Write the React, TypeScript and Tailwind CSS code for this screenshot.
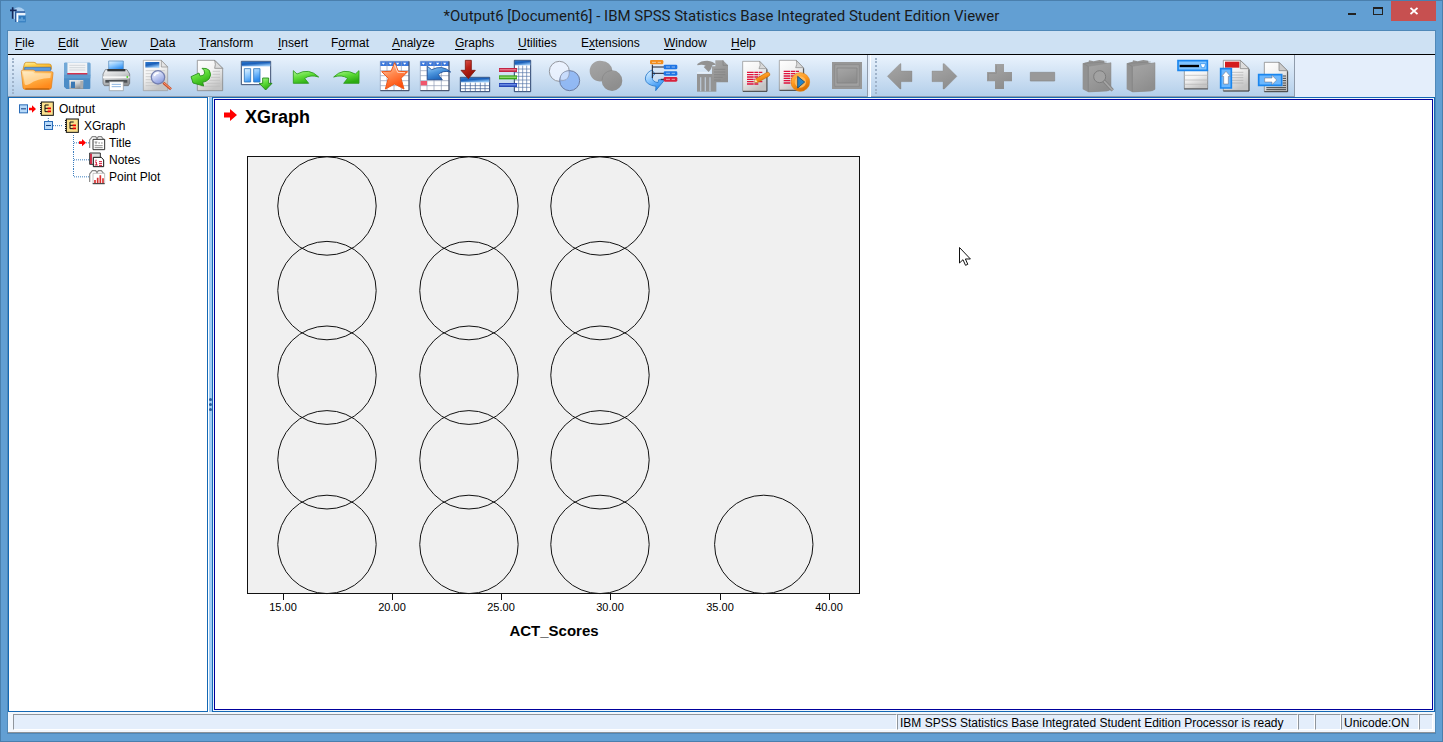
import React from "react";

type IconProps = { box: string; children: React.ReactNode };

function Icon({ box, children }: IconProps) {
  return (
    <svg viewBox={box} className="block size-8 overflow-visible" aria-hidden="true">
      {children}
    </svg>
  );
}

function Gradients() {
  const stops: [string, string, string, string][] = [
    ["gFolder", "#ffe9b8", "#ffb347", "#ff8a1c"],
    ["gTab", "#fff2a8", "#ffd04a", "#f5a21c"],
    ["gBlue", "#9fd4fb", "#4b94dc", "#1b62b8"],
    ["gBar", "#2c79cf", "#1a5fb8", "#8fc4f5"],
    ["gPage", "#ffffff", "#f2f2f2", "#c4c4c4"],
    ["gGreen", "#b5f59a", "#5fdd3a", "#2cab12"],
    ["gStar", "#ffe3d2", "#ff8a50", "#ff4e0a"],
    ["gRed", "#e06058", "#bb2218", "#8c100a"],
    ["gGray", "#a6a6a6", "#9b9b9b", "#8e8e8e"],
    ["gSteel", "#f6f6f6", "#cfd1d3", "#8e9194"],
    ["gLens", "#ffffff", "#c9d2f4", "#8e9fe0"],
    ["gOrange", "#ffc061", "#ff9a1f", "#d96f00"],
    ["gSky", "#e8f6ff", "#8cc8ff", "#2c8cf0"],
  ];
  return (
    <svg className="absolute size-0" aria-hidden="true">
      <defs>
        {stops.map(([id, a, b, c]) => (
          <linearGradient key={id} id={id} x1="0" y1="0" x2="0.5" y2="1">
            <stop offset="0" stopColor={a} />
            <stop offset="0.5" stopColor={b} />
            <stop offset="1" stopColor={c} />
          </linearGradient>
        ))}
      </defs>
    </svg>
  );
}

const OpenIcon = () => (
  <Icon box="63 180 96 96">
    <path d="M70 204l3-12q1-5 7-5h22q6 0 7 5h38q7 0 7 6v10H69z" fill="url(#gTab)" stroke="#c9820c" strokeWidth="2" />
    <path d="M74 202h78v10H74z" fill="#5a9be0" stroke="#3370b8" strokeWidth="2" />
    <path d="M64 214q0-4 5-4h30q4 0 6 3l2 2h48q5 0 4 5l-5 43q-1 5-6 5H75q-5 0-6-5z" fill="url(#gFolder)" stroke="#e07b10" strokeWidth="2" />
    <path d="M69 218q0-3 4-3h24q4 0 7 5h49l-2 14q-40 2-62 18-14 6-15 0z" fill="#fff4dc" opacity="0.55" />
    <path d="M76 267h72" stroke="#a85404" strokeWidth="3" />
  </Icon>
);
const SaveIcon = () => (
  <Icon box="183 180 96 96">
    <path d="M192 191q0-3 3-3h73q3 0 3 3v73q0 3-3 3h-69l-7-7z" fill="#4c8cc6" />
    <path d="M192 191q0-3 3-3h6v40h-9zM262 188h6q3 0 3 3v37h-9z" fill="#72a9d8" />
    <path d="M202 188h60v32h-60z" fill="#f2f4f6" />
    <path d="M208 196h48M208 203h48M208 210h48" stroke="#c3c8ce" strokeWidth="2" />
    <path d="M202 219h60v5h-60z" fill="#d4304c" />
    <path d="M192 224h79v11h-79z" fill="#5d9bd0" />
    <path d="M208 240h42v27h-42z" fill="url(#gSteel)" />
    <path d="M213 245h12v19h-12z" fill="#3b78b4" />
    <path d="M241 243h8v22h-8z" fill="#a8acb0" />
  </Icon>
);
const PrintIcon = () => (
  <Icon box="303 180 96 96">
    <path d="M326 183h44v28h-44z" fill="url(#gSky)" stroke="#4b84b8" strokeWidth="2" />
    <path d="M316 209h65l8 13v28l-4 7h-72l-4-7v-28z" fill="url(#gSteel)" stroke="#606468" strokeWidth="2" />
    <path d="M322 207h54v7h-54z" fill="#34383c" />
    <path d="M309 229h80v6h-80z" fill="#f7f7f7" />
    <path d="M316 240h66v8h-66z" fill="#4c5054" />
    <path d="M328 245h42v27h-42z" fill="#fff" stroke="#8b9196" strokeWidth="2" />
    <path d="M335 253h28M335 260h28" stroke="#8db5e0" strokeWidth="3" />
    <circle cx="382" cy="231" r="3" fill="#4fd22a" />
  </Icon>
);
const PreviewIcon = () => (
  <Icon box="423 180 96 96">
    <path d="M430 181h54l19 20v71h-73z" fill="url(#gPage)" stroke="#999" strokeWidth="2" />
    <path d="M484 181v20h19z" fill="#e4e4e4" stroke="#888" strokeWidth="2" />
    <path d="M436 186h42v17h-42z" fill="url(#gBar)" />
    <path d="M437 212h58M437 221h58M437 230h58M437 239h58M437 248h58M437 257h58" stroke="#bfbfbf" strokeWidth="2" />
    <path d="M490 248l23 20" stroke="#c8502c" strokeWidth="8" />
    <path d="M491 248l21 18" stroke="#ff9f78" strokeWidth="3" />
    <circle cx="474" cy="232" r="20" fill="url(#gLens)" stroke="#7580b0" strokeWidth="4" />
    <path d="M463 228q3-10 13-9" stroke="#fff" strokeWidth="4" fill="none" />
  </Icon>
);
const ExportIcon = () => (
  <Icon box="573 180 96 96">
    <path d="M592 181h52l24 24v67h-76z" fill="url(#gPage)" stroke="#777" strokeWidth="2" />
    <path d="M644 181q4 12 0 24h24z" fill="#ddd" stroke="#777" strokeWidth="2" />
    <path d="M638 214h22M638 223h22M632 232h28M628 241h32M620 250h40M602 259h58" stroke="#bbb" strokeWidth="2" />
    <path d="M573 230l24-11 3 9q13 0 14-9 0-9-8-14 14-2 22 6 8 14-1 26-7 8-19 10l3 11-32-9z" fill="url(#gGreen)" stroke="#238c14" strokeWidth="2.5" />
  </Icon>
);
const DialogIcon = () => (
  <Icon box="717 180 96 96">
    <path d="M724 184h88v70h-88z" fill="#fff" stroke="#3a4d70" strokeWidth="3" />
    <path d="M725 185h86v14h-86z" fill="url(#gBar)" />
    <path d="M733 206h19v40h-19zM761 206h19v40h-19z" fill="url(#gSky)" stroke="#2e76ba" strokeWidth="2.5" />
    <path d="M788 234h18v16h10l-19 20-19-20h10z" fill="url(#gGreen)" stroke="#1c8410" strokeWidth="2.5" />
  </Icon>
);
const UndoIcon = () => (
  <Icon box="177 30 96 96">
    <path d="M190 62l11 10q36-20 65 9-25-8-42 4l12 15h-46z" fill="url(#gGreen)" stroke="#2a9a1a" strokeWidth="2.5" />
  </Icon>
);
const RedoIcon = () => (
  <Icon box="297 30 96 96">
    <path d="M387 62l-11 10q-36-20-65 9 25-8 42 4l-12 15h46z" fill="url(#gGreen)" stroke="#2a9a1a" strokeWidth="2.5" />
  </Icon>
);

function Sheet({ x }: { x: number }) {
  return (
    <g transform={`translate(${x} 0)`}>
      <path d="M1 34h86v88H1z" fill="#fff" stroke="#8c98b4" strokeWidth="2" />
      <path d="M1 34h86v14H1z" fill="#3b78dc" />
      <path d="M5 38h10l-5 6zM26 38h10l-5 6zM48 38h10l-5 6zM69 38h10l-5 6z" fill="#fff" />
      <path d="M21 34v88M42 34v88M64 34v88M1 62h86M1 77h86M1 92h86M1 107h86" stroke="#8c98b4" strokeWidth="2" />
      <path d="M87 34v88H1" fill="none" stroke="#3c4862" strokeWidth="3" />
    </g>
  );
}

const StarIcon = () => (
  <Icon box="453 30 96 96">
    <Sheet x={456} />
    <path d="M500 38l11 26 28 1-20 20 9 32-28-15-28 15 9-32-20-20 28-1z" fill="url(#gStar)" stroke="#ef5a1c" strokeWidth="3" />
    <path d="M500 44l9 23 22 1" stroke="#fff" strokeWidth="2" fill="none" />
  </Icon>
);
const GotoCaseIcon = () => (
  <Icon box="573 30 96 96">
    <Sheet x={576} />
    <path d="M578 93h19v13h-19z" fill="#f0566c" />
    <path d="M598 49l13 10q32-16 57 7-24-6-37 8l12 15h-45z" fill="url(#gBlue)" stroke="#1c4c94" strokeWidth="2.5" />
  </Icon>
);

const InsertCaseIcon = () => (
  <Icon box="693 30 96 96">
    <path d="M697 82h88v43h-88z" fill="#fff" stroke="#27406c" strokeWidth="3" />
    <path d="M698 83h86v14h-86z" fill="url(#gBar)" />
    <path d="M712 98v26M727 98v26M742 98v26M757 98v26M771 98v26M698 107h86M698 116h86" stroke="#3a5a92" strokeWidth="2" />
    <path d="M712 31h18v30h12l-21 25-22-25h13z" fill="url(#gRed)" stroke="#7e1810" strokeWidth="2.5" />
  </Icon>
);
const InsertVariableIcon = () => (
  <Icon box="813 30 96 96">
    <path d="M859 31h49v94h-49z" fill="#fff" stroke="#27406c" strokeWidth="3" />
    <path d="M860 32h47v14h-47z" fill="url(#gBar)" />
    <path d="M872 47v77M884 47v77M896 47v77M860 57h47M860 68h47M860 79h47M860 90h47M860 101h47M860 112h47" stroke="#5575a8" strokeWidth="2" />
    <path d="M813 54h54v12h-54z" fill="#c22444" />
    <path d="M815 58h50v3h-50z" fill="#f59aa8" />
    <path d="M813 76h54v12h-54z" fill="#3aa41c" />
    <path d="M815 80h50v3h-50z" fill="#b2f08c" />
    <path d="M813 99h54v12h-54z" fill="#2648b8" />
    <path d="M815 103h50v3h-50z" fill="#8cacf8" />
  </Icon>
);
const VennIcon = () => (
  <Icon box="33 30 96 96">
    <circle cx="64" cy="64" r="30" fill="#edf4ff" fillOpacity="0.8" stroke="#94979e" strokeWidth="3" />
    <circle cx="95" cy="92" r="30" fill="#84b0f4" fillOpacity="0.8" stroke="#6c7ca0" strokeWidth="3" />
    <path d="M66 90q0-26 27-28 3 18-9 27-8 4-18 1z" fill="#c8dcfc" stroke="#8b93a8" strokeWidth="2" />
  </Icon>
);
const UnionIcon = () => (
  <Icon box="153 30 96 96">
    <path d="M192 33a31 31 0 0 1 31 28a31 31 0 1 1-32 33a31 31 0 1 1 1-61z" fill="url(#gGray)" />
    <path d="M192 91q1-26 30-30" stroke="#858585" strokeWidth="2" fill="none" />
  </Icon>
);
const SelectIcon = () => (
  <Icon box="315 30 96 96">
    <path d="M336 60q-20 9-20 27 2 18 32 22l-1 13 26-31-17-2-2 9q-18-3-17-15 0-7 8-11z" fill="url(#gSky)" stroke="#2878c8" strokeWidth="2.5" />
    <path d="M337 44v40M337 51h36M337 70h36M362 88h12" stroke="#1c1c2c" strokeWidth="3" fill="none" />
    <rect x="330" y="30" width="40" height="13" rx="4" fill="#f28c1c" />
    <rect x="371" y="44" width="41" height="14" rx="4" fill="#1f75e4" />
    <rect x="371" y="64" width="41" height="13" rx="4" fill="#1f75e4" />
    <rect x="371" y="81" width="41" height="14" rx="4" fill="#d8213c" />
    <path d="M336 37h12M353 37h10M378 51h12M395 51h10M378 70h12M395 70h10M378 88h12M395 88h10" stroke="#fff" strokeWidth="2" opacity=".8" />
  </Icon>
);
const PivotIcon = () => (
  <Icon box="465 30 96 96">
    <path d="M471 72h58v53h-58z" fill="#949494" />
    <path d="M482 82v42M496 82v42M510 82v42" stroke="#b9c5d2" strokeWidth="4" />
    <path d="M471 68h40" stroke="#e6eff8" strokeWidth="5" />
    <path d="M472 42q10-10 30-10 18 1 26 12l-11 2q-2 12-11 20l-15-15 6-4q-11-5-25-1z" fill="#929292" />
    <path d="M516 49h10V31h23l15 15v51h-48z" fill="url(#gGray)" />
    <path d="M549 31v15h15M522 58h34M522 66h34M522 74h34M522 82h26M522 90h20" stroke="#808080" strokeWidth="2" fill="none" />
  </Icon>
);

function SyntaxPage({ x }: { x: number }) {
  return (
    <g transform={`translate(${x} 0)`}>
      <path d="M1 34h51l21 22v68H1z" fill="url(#gPage)" stroke="#888" strokeWidth="2" />
      <path d="M52 34q4 12-2 22h23z" fill="#d8d8d8" stroke="#888" strokeWidth="2" />
      <path d="M14 67h46M14 74h38M14 81h46M14 88h40M14 95h46M14 102h36" stroke="#e0123c" strokeWidth="4" strokeDasharray="20 2 12 2" />
      <path d="M2 124h72V58" stroke="#333" strokeWidth="2.5" fill="none" />
    </g>
  );
}

const EditSyntaxIcon = () => (
  <Icon box="591 30 96 96">
    <SyntaxPage x={607} />
    <path d="M643 96l4-9 34-20q6-2 8 4 2 5-3 8l-34 19z" fill="url(#gOrange)" stroke="#c06c08" strokeWidth="2" />
    <path d="M643 96l4-9 6 10z" fill="#ffe0b0" />
  </Icon>
);
const RunSyntaxIcon = () => (
  <Icon box="711 30 96 96">
    <g transform="translate(0 -3)">
      <SyntaxPage x={717} />
    </g>
    <circle cx="781" cy="96" r="28" fill="url(#gOrange)" stroke="#e38312" strokeWidth="2" />
    <circle cx="781" cy="96" r="17" fill="#ffb95a" />
    <path d="M773 79l21 17-21 18z" fill="#2684c8" stroke="#17486e" strokeWidth="2.5" />
  </Icon>
);
const DesignateIcon = () => (
  <Icon box="873 30 96 96">
    <path d="M876 36h90v81h-90z" fill="#979797" />
    <path d="M884 44h74v65h-74z" fill="#a0a0a0" stroke="#868686" strokeWidth="2" />
    <path d="M891 54h60v45h-60z" fill="url(#gGray)" stroke="#7e7e7e" strokeWidth="2" />
  </Icon>
);
const BackIcon = () => (
  <Icon box="72 30 96 96">
    <path d="M82 79l38-38h3v22h33v32h-33v22h-3z" fill="url(#gGray)" stroke="#8a8a8a" strokeWidth="1" />
  </Icon>
);
const ForwardIcon = () => (
  <Icon box="204 30 96 96">
    <path d="M291 79l-38-38h-4v22h-33v32h33v22h4z" fill="url(#gGray)" stroke="#8a8a8a" strokeWidth="1" />
  </Icon>
);
const PlusIcon = () => (
  <Icon box="372 30 96 96">
    <path d="M405 42h27v24h24v28h-24v23h-27V94h-24V66h24z" fill="url(#gGray)" />
    <path d="M385 70h24V46M385 90V70" stroke="#858585" strokeWidth="1.5" fill="none" />
  </Icon>
);
const MinusIcon = () => (
  <Icon box="498 30 96 96">
    <path d="M511 67h73v26h-73z" fill="#999" stroke="#858585" strokeWidth="2" />
  </Icon>
);

function Book({ x }: { x: number }) {
  return (
    <g transform={`translate(${x} 0)`}>
      <path d="M0 40l18-5 1-4 14 3 17-4 15 2v6l20 4v76l-12 6-57 2L0 118z" fill="#929292" />
      <path d="M17 49l68-11v80l-8 4-60 4z" fill="url(#gGray)" stroke="#8a8a8a" strokeWidth="1.5" />
      <path d="M2 41l15 8v75M6 40l66-4" stroke="#848484" strokeWidth="2" fill="none" />
    </g>
  );
}

const BookSearchIcon = () => (
  <Icon box="666 30 96 96">
    <Book x={668} />
    <path d="M732 93l26 28" stroke="#828282" strokeWidth="10" />
    <path d="M732 93l26 28" stroke="#a6a6a6" strokeWidth="5" />
    <circle cx="719" cy="80" r="18" fill="#a2a2a2" stroke="#7c7c7c" strokeWidth="3" />
  </Icon>
);
const BookIcon = () => (
  <Icon box="792 30 96 96">
    <Book x={800} />
  </Icon>
);
const HeadingMenuIcon = () => (
  <Icon box="78 30 96 96">
    <path d="M103 60h70v56h-70z" fill="url(#gPage)" stroke="#777" strokeWidth="2" />
    <path d="M103 76h70M103 90h70M103 103h70" stroke="#b4b4b4" strokeWidth="2" />
    <path d="M102 117h72" stroke="#444" strokeWidth="2.5" />
    <path d="M84 32h88v29H84z" fill="#80c4ff" stroke="#1b86ee" strokeWidth="5" />
    <path d="M89 48h58" stroke="#000" strokeWidth="7" />
    <path d="M151 41h16l-4 12h-8z" fill="#fff" stroke="#1b86ee" strokeWidth="2" />
  </Icon>
);
const PageUpIcon = () => (
  <Icon box="204 30 96 96">
    <path d="M220 31h51l26 25v67h-77z" fill="url(#gPage)" stroke="#777" strokeWidth="2" />
    <path d="M225 35h43v18h-43z" fill="#d41c1c" />
    <path d="M271 31v25h26z" fill="#ddd" stroke="#777" strokeWidth="2" />
    <path d="M246 67h34M246 75h34M246 83h34M246 91h34M246 99h34" stroke="#aaa" strokeWidth="2" />
    <path d="M220 123h77V58" stroke="#333" strokeWidth="2.5" fill="none" />
    <path d="M212 56h32v58h-32z" fill="#6cb8ff" stroke="#1b86ee" strokeWidth="5" />
    <path d="M228 64l13 15h-6v23h-14V79h-6z" fill="#fff" stroke="#667" strokeWidth="1.5" />
  </Icon>
);
const PageNextIcon = () => (
  <Icon box="324 30 96 96">
    <path d="M343 37h44l25 25v63h-69z" fill="url(#gPage)" stroke="#777" strokeWidth="2" />
    <path d="M387 37v25h25z" fill="#ccc" stroke="#777" strokeWidth="2" />
    <path d="M398 78h10M398 85h10M398 92h10M398 99h10M398 106h10M349 113h59M349 119h59" stroke="#444" strokeWidth="3" />
    <path d="M343 125h70V64" stroke="#333" strokeWidth="2.5" fill="none" />
    <path d="M326 74h69v32h-69z" fill="#6cb8ff" stroke="#1b86ee" strokeWidth="5" />
    <path d="M344 84h22v-8l14 14-14 14v-8h-22z" fill="#fff" stroke="#667" strokeWidth="1.5" />
  </Icon>
);

type Tool = { name: string; icon: React.FC; gap?: string; off?: boolean };

const mainTools: Tool[] = [
  { name: "Open", icon: OpenIcon },
  { name: "Save", icon: SaveIcon },
  { name: "Print", icon: PrintIcon },
  { name: "Print Preview", icon: PreviewIcon },
  { name: "Export", icon: ExportIcon, gap: "ml-2.5" },
  { name: "Recall Dialog", icon: DialogIcon, gap: "ml-2" },
  { name: "Undo", icon: UndoIcon, gap: "ml-2.5" },
  { name: "Redo", icon: RedoIcon },
  { name: "Go to Data", icon: StarIcon, gap: "ml-2.5" },
  { name: "Go to Case", icon: GotoCaseIcon },
  { name: "Insert Case", icon: InsertCaseIcon },
  { name: "Variables", icon: InsertVariableIcon },
  { name: "Use Variable Sets", icon: VennIcon, gap: "ml-2.5" },
  { name: "Show All Variables", icon: UnionIcon, off: true },
  { name: "Select Last Output", icon: SelectIcon, gap: "ml-4" },
  { name: "Associate Auto Script", icon: PivotIcon, gap: "ml-2.5", off: true },
  { name: "Edit Script", icon: EditSyntaxIcon, gap: "ml-0.5" },
  { name: "Run Script", icon: RunSyntaxIcon },
  { name: "Designate Window", icon: DesignateIcon, gap: "ml-3.5", off: true },
];

const outlineTools: Tool[] = [
  { name: "Promote", icon: BackIcon, off: true },
  { name: "Demote", icon: ForwardIcon, gap: "ml-1", off: true },
  { name: "Expand", icon: PlusIcon, gap: "ml-4", off: true },
  { name: "Collapse", icon: MinusIcon, gap: "ml-0.5", off: true },
  { name: "Show", icon: BookSearchIcon, gap: "ml-4", off: true },
  { name: "Hide", icon: BookIcon, gap: "ml-0.5", off: true },
  { name: "Insert Heading", icon: HeadingMenuIcon, gap: "ml-3" },
  { name: "Insert Title", icon: PageUpIcon, gap: "ml-0.5" },
  { name: "Insert Text", icon: PageNextIcon },
];

function Toolbar({ label, tools }: { label: string; tools: Tool[] }) {
  return (
    <div
      role="toolbar"
      aria-label={label}
      className="flex items-center border-r border-b border-[#8f9bab] bg-linear-to-b from-[#eaf3fd] to-[#b4cfea]"
    >
      <span className="mr-[3px] ml-1 h-9 w-0.5 border-l-2 border-dotted border-[#9fb3ca]" />
      {tools.map(({ name, icon: Glyph, gap, off }) => (
        <button key={name} type="button" aria-label={name} disabled={off} className={`px-1 ${gap ?? ""}`}>
          <Glyph />
        </button>
      ))}
    </div>
  );
}

const menus: [string, string][] = [
  ["File", "w-[43px]"],
  ["Edit", "w-[43px]"],
  ["View", "w-[49px]"],
  ["Data", "w-[49px]"],
  ["Transform", "w-[79px]"],
  ["Insert", "w-[53px]"],
  ["Format", "w-[61px]"],
  ["Analyze", "w-[63px]"],
  ["Graphs", "w-[63px]"],
  ["Utilities", "w-[63px]"],
  ["Extensions", "w-[83px]"],
  ["Window", "w-[67px]"],
  ["Help", "w-[43px]"],
];
const mnemonicAt: Record<string, number> = { Format: 1, Extensions: 1 };

function MenuBar() {
  return (
    <nav className="flex h-[23px] shrink-0 items-center bg-[#cee1f3] pl-[7px]">
      {menus.map(([label, width]) => {
        const i = mnemonicAt[label] ?? 0;
        return (
          <button key={label} type="button" className={`text-left ${width}`}>
            {label.slice(0, i)}
            <span className="underline underline-offset-2">{label[i]}</span>
            {label.slice(i + 1)}
          </button>
        );
      })}
    </nav>
  );
}

const OutputGlyph = ({ x, y }: { x: number; y: number }) => (
  <g transform={`translate(${x} ${y})`}>
    <rect x="4" y="1" width="36" height="40" fill="#fbe08c" stroke="#111" strokeWidth="3" />
    <path d="M2 4v36" stroke="#111" strokeWidth="4" strokeDasharray="3 3" />
    <path d="M26 10H15v20h11M15 20h9" stroke="#111" strokeWidth="3" fill="none" />
    <path d="M23 20h10M23 29h10" stroke="#e00" strokeWidth="5" />
  </g>
);
const MinusBox = ({ x, y }: { x: number; y: number }) => (
  <g>
    <rect x={x + 1.5} y={y + 1.5} width="24" height="24" fill="#b8dafa" stroke="#2a6cb8" strokeWidth="3" />
    <path d={`M${x + 6} ${y + 13.5}h15`} stroke="#123c7c" strokeWidth="3" />
  </g>
);
const RedArrow = ({ x, y }: { x: number; y: number }) => (
  <path d={`M${x} ${y - 4}h9v-7l12 11-12 11v-7h-9z`} fill="#f00" />
);
const dots = { stroke: "#3d7fbf", strokeWidth: 3, strokeDasharray: "3 3", fill: "none" };

const BookOutline = ({ x, y }: { x: number; y: number }) => (
  <path
    d={`M${x} ${y + 36}V${y + 12}l8-10h10l4 6 4-6h9l8 10v8M${x + 22} ${y + 8}v8`}
    fill="#fff"
    stroke="#888"
    strokeWidth="3.5"
  />
);

function OutlineTree() {
  return (
    <ul className="pt-[3px] leading-[17px]">
      <li className="flex h-[17px] items-center">
        <svg viewBox="27 32 150 51" className="h-[17px] w-[50px]">
          <MinusBox x={57} y={42} />
          <RedArrow x={87} y={56} />
          <OutputGlyph x={120} y={34} />
        </svg>
        Output
      </li>
      <li className="flex h-[17px] items-center">
        <svg viewBox="27 83 225 51" className="h-[17px] w-[75px]">
          <path d="M145 83v9M159 106h30" {...dots} />
          <MinusBox x={132} y={92} />
          <OutputGlyph x={195} y={85} />
        </svg>
        XGraph
      </li>
      <li className="flex h-[17px] items-center">
        <svg viewBox="27 134 300 51" className="h-[17px] w-[100px]">
          <path d="M220.500 134v51M222 157.500h45" {...dots} />
          <RedArrow x={237} y={157} />
          <BookOutline x={269} y={137} />
          <path d="M279 147h35v31h-35z" fill="#fff" stroke="#333" strokeWidth="3" />
          <path d="M284 155h8M288 155v7M295 158h5M303 158h5M284 166h24M284 172h24" stroke="#777" strokeWidth="2.500" />
        </svg>
        Title
      </li>
      <li className="flex h-[17px] items-center">
        <svg viewBox="27 185 300 51" className="h-[17px] w-[100px]">
          <path d="M220.500 185v51M222 208.500h45" {...dots} />
          <path d="M269 188h32v34h-32z" fill="#ddd" stroke="#333" strokeWidth="3" />
          <path d="M273 190v31" stroke="#d01030" strokeWidth="5" />
          <path d="M280 201h24l7 8v20h-31z" fill="#fff" stroke="#111" strokeWidth="3" />
          <path d="M288 208v4M285 215h4v9M284 224h9M297 214h9M297 220h9M297 226h9" stroke="#d01030" strokeWidth="3" fill="none" />
        </svg>
        Notes
      </li>
      <li className="flex h-[17px] items-center">
        <svg viewBox="27 236 300 51" className="h-[17px] w-[100px]">
          <path d="M220.500 236v24M222 259.500h45" {...dots} />
          <BookOutline x={269} y={239} />
          <path d="M279 249h35v31h-35z" fill="#fff" stroke="#aaa" strokeWidth="2" />
          <path d="M285 279v-10M293 279v-17M301 279v-24M309 279v-15" stroke="#d83030" strokeWidth="5" />
          <path d="M278 280h36" stroke="#333" strokeWidth="3" />
        </svg>
        Point Plot
      </li>
    </ul>
  );
}

const points: { score: number; count: number }[] = [
  { score: 17, count: 5 },
  { score: 23.5, count: 5 },
  { score: 29.5, count: 5 },
  { score: 37, count: 1 },
];
const scoreTicks = [15, 20, 25, 30, 35, 40];
const xOf = (score: number) => 43.3 + (score - 15) * 21.84;

function PointPlot() {
  return (
    <svg viewBox="0 0 640 500" className="mt-6 ml-[25px] block h-[500px] w-[640px] shrink-0" role="img" aria-label="Point Plot">
      <rect x="7.500" y="6.500" width="612" height="437" fill="#f0f0f0" stroke="#111" />
      {points.flatMap(({ score, count }) =>
        Array.from({ length: count }, (_, i) => (
          <circle key={`${score}-${i}`} cx={xOf(score)} cy={394.4 - i * 84.6} r="49.2" fill="none" stroke="#111" />
        )),
      )}
      {scoreTicks.map((t) => (
        <g key={t}>
          <path d={`M${Math.floor(xOf(t)) + 0.5} 443v7`} stroke="#111" />
          <text x={Math.floor(xOf(t))} y="461" textAnchor="middle" className="text-[11px]">
            {t.toFixed(2)}
          </text>
        </g>
      ))}
      <text x="314" y="486" textAnchor="middle" className="text-[15px] font-bold">
        ACT_Scores
      </text>
    </svg>
  );
}

function TitleBar() {
  return (
    <header className="flex h-[30px] shrink-0 items-start">
      <svg viewBox="30 21 48 48" className="mt-1.5 ml-[9px] size-4">
        <circle cx="56" cy="42" r="20" fill="#a8cdf0" />
        <path d="M38 22v34M30 31h20" stroke="#14285a" strokeWidth="5" />
        <path d="M47 66V36h28" stroke="#2a5a9c" strokeWidth="4" fill="none" />
        <path d="M52 66V42h24" stroke="#fff" strokeWidth="4" fill="none" />
        <path d="M56 47h21v20H56z" fill="#2e78bc" />
        <path d="M60 64v-8M66 64V52M72 64v-6" stroke="#8cc4f0" strokeWidth="3" />
      </svg>
      <h1 className="flex-1 pl-[78px] text-center font-[Roboto,sans-serif] text-[15px] leading-[30px] text-[#1a1a1a]">
        *Output6 [Document6] - IBM SPSS Statistics Base Integrated Student Edition Viewer
      </h1>
      <button type="button" aria-label="Minimize" className="flex h-5 w-[26px] justify-center">
        <span className="mt-3 h-0.5 w-2 bg-[#222]" />
      </button>
      <button type="button" aria-label="Maximize" className="flex h-5 w-[26px] justify-center">
        <span className="mt-1.5 h-2 w-2.5 border border-t-2 border-[#222]" />
      </button>
      <button type="button" aria-label="Close" className="mr-1.5 flex h-5 w-[45px] items-center justify-center bg-[#c75050]">
        <svg viewBox="0 0 8 8" className="size-2">
          <path d="M0.500 1l7 6M7.500 1l-7 6" stroke="#fff" strokeWidth="1.800" />
        </svg>
      </button>
    </header>
  );
}

function Cell({ className, children }: { className: string; children?: React.ReactNode }) {
  return (
    <span
      className={`flex items-center border-t border-r border-b border-l border-t-[#8f959c] border-r-white border-b-white border-l-[#8f959c] bg-[#e4eefb] pt-0.5 whitespace-nowrap ${className}`}
    >
      {children}
    </span>
  );
}

function StatusBar() {
  return (
    <footer className="flex h-[21px] shrink-0 border-b border-[#8b9299] bg-[#f2f7fd] pt-0.5 pr-0.5 pb-0.5 pl-[5px]">
      <Cell className="flex-1" />
      <Cell className="w-[401px] pl-0.5">IBM SPSS Statistics Base Integrated Student Edition Processor is ready</Cell>
      <Cell className="w-[17px]" />
      <Cell className="w-[26px]" />
      <Cell className="w-[78px] pl-0.5">Unicode:ON</Cell>
      <Cell className="w-[14px]" />
    </footer>
  );
}

export default function App() {
  return (
    <div className="relative flex h-screen flex-col overflow-hidden border border-[#4a7fad] bg-[#629fd3] font-['Liberation_Sans',Arial,sans-serif] text-[12px] text-black">
      <Gradients />
      <TitleBar />
      <div className="mx-[7px] mb-2 flex min-h-0 flex-1 flex-col outline outline-[#4f88b8]">
        <MenuBar />
        <div className="flex h-[43px] shrink-0 border-t border-black bg-[#e4eefb]">
          <Toolbar label="Viewer tools" tools={mainTools} />
          <div className="ml-0.5 flex border-l border-white">
            <Toolbar label="Outline tools" tools={outlineTools} />
          </div>
        </div>
        <main className="flex min-h-0 flex-1 bg-[#b7d9f8]">
          <aside className="w-[200px] shrink-0 overflow-hidden border border-[#1468b4] bg-white">
            <OutlineTree />
          </aside>
          <div className="flex w-1 shrink-0 flex-col items-center justify-center gap-0.5 border-l border-white bg-[#a0cdf6]">
            <span className="size-[3px] rounded-full bg-[#2a5a9c]" />
            <span className="size-[3px] rounded-full bg-[#2a5a9c]" />
            <span className="size-[3px] rounded-full bg-[#2a5a9c]" />
          </div>
          <div className="flex min-w-0 flex-1 border border-[#1468b4] bg-[#eef5fc] p-px">
            <section className="min-w-0 flex-1 overflow-hidden border border-[#00009c] bg-white pt-2">
              <div className="flex items-center gap-2 pl-[9px]">
                <svg viewBox="0 0 13 12" className="mb-1 h-3 w-[13px]">
                  <path d="M0 3.500h6V0l7 6-7 6V8.500H0z" fill="#f00" />
                </svg>
                <h2 className="text-[18px] leading-[18px] font-bold">XGraph</h2>
              </div>
              <PointPlot />
            </section>
          </div>
        </main>
        <StatusBar />
      </div>
      <svg viewBox="0 0 12 19" className="absolute top-[246px] left-[958px] h-[19px] w-3">
        <path d="M0.500 0.500v15.500l3.500-3.300 2.500 5.600 2.300-1-2.400-5.300h5z" fill="#fff" stroke="#111" />
      </svg>
    </div>
  );
}
